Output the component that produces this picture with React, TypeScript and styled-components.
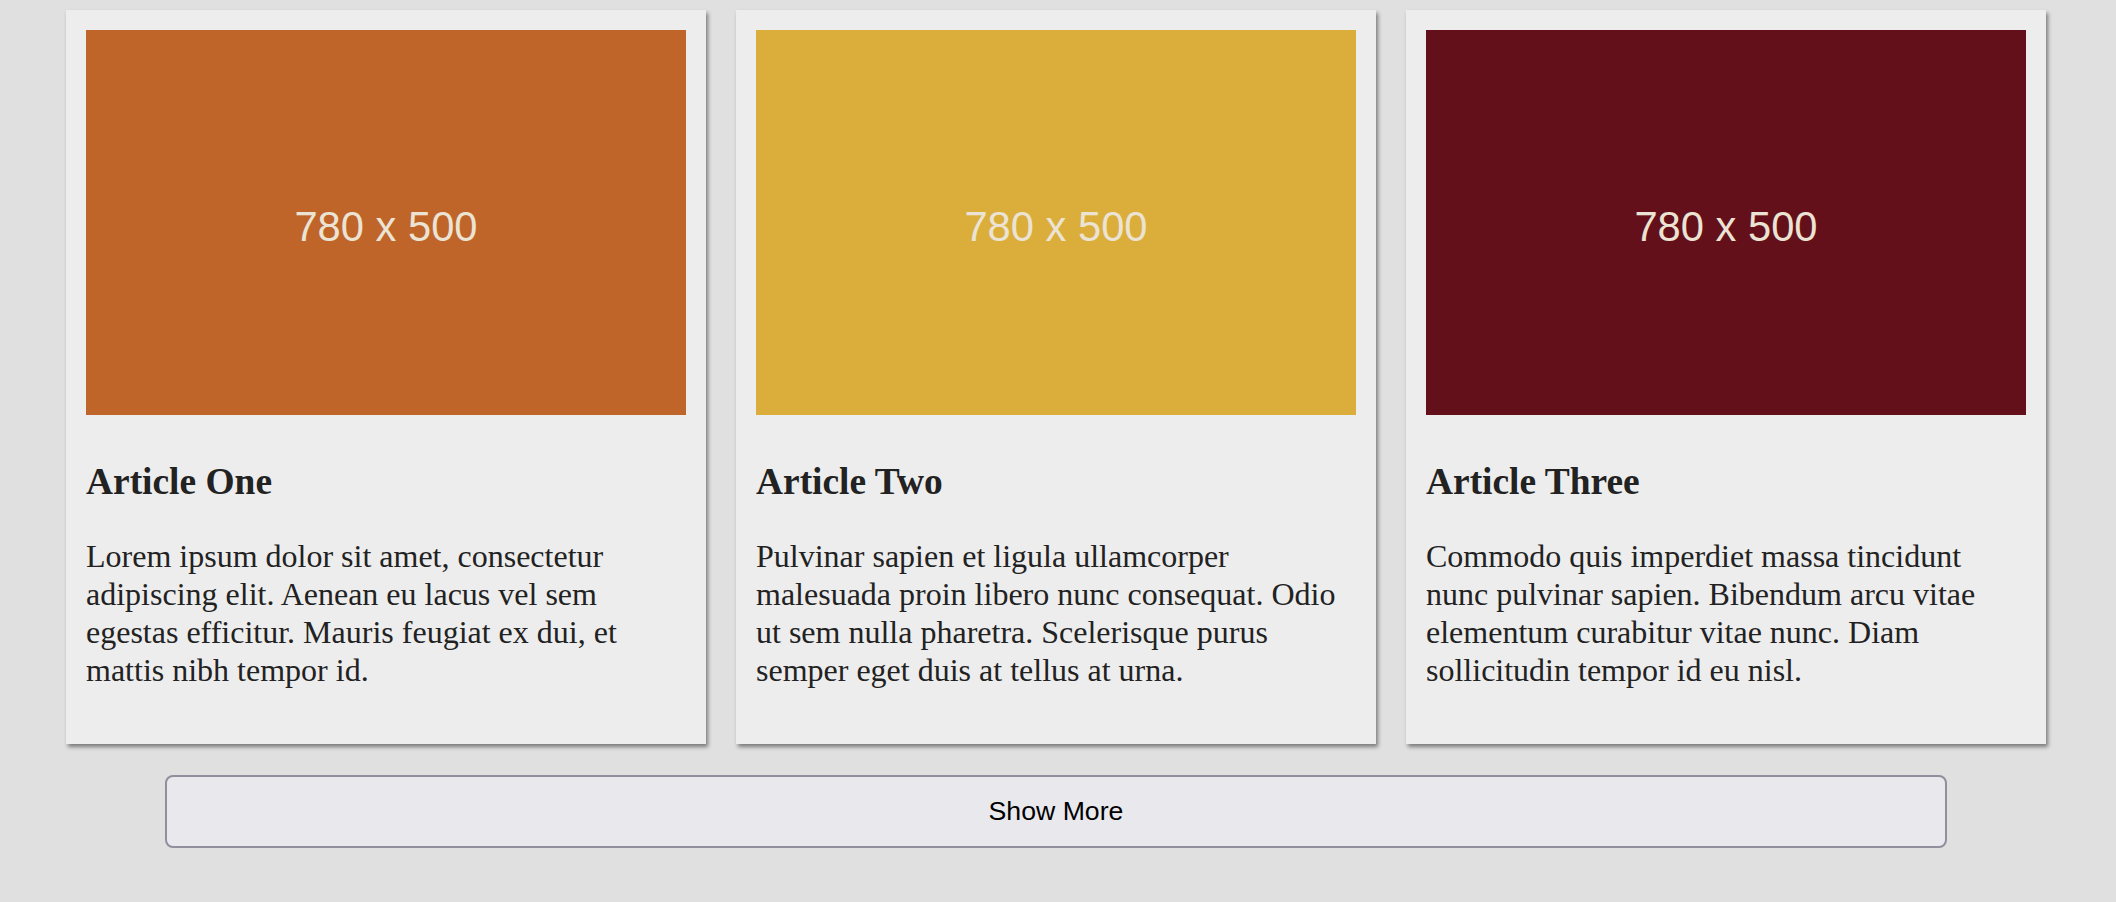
import styled, { createGlobalStyle } from 'styled-components';

const GlobalStyle = createGlobalStyle`
  html, body {
    margin: 0;
    padding: 0;
    background: #e0e0e0;
  }
  body {
    font-family: "Liberation Serif", "Times New Roman", serif;
    font-size: 32px;
    color: #222;
  }
`;

const Page = styled.main`
  width: 1980px;
  padding: 10px 0 56px 66px;
`;

const CardGrid = styled.section`
  display: grid;
  grid-template-columns: repeat(3, 640px);
  gap: 30px;
`;

const Card = styled.article`
  background: #ededed;
  padding: 20px 20px 23px;
  box-shadow: 2px 3px 4px rgba(0, 0, 0, 0.45);
`;

const Thumb = styled.div<{ $bg: string }>`
  box-sizing: border-box;
  width: 600px;
  height: 385px;
  padding-top: 8px;
  background: ${(p) => p.$bg};
  display: flex;
  align-items: center;
  justify-content: center;
  font-family: "Liberation Sans", Arial, sans-serif;
  font-size: 41.7px;
  color: #ebe3d3;
`;

const Title = styled.h3`
  font-size: 37.44px;
  font-weight: 700;
  margin: 44.5px 0 34px;
  line-height: 1.15;
`;

const Body = styled.p`
  margin: 0 0 32px;
  line-height: 38.2px;
`;

const MoreButton = styled.button`
  display: block;
  width: 90%;
  margin: 31px auto 0;
  padding: 19px 8px;
  background: #e9e9ed;
  border: 2px solid #8f8f9d;
  border-radius: 8px;
  font-family: "Liberation Sans", Arial, sans-serif;
  font-size: 26.67px;
  color: #000;
  cursor: pointer;
`;

const articles = [
  {
    title: 'Article One',
    color: '#c0652a',
    text: 'Lorem ipsum dolor sit amet, consectetur adipiscing elit. Aenean eu lacus vel sem egestas efficitur. Mauris feugiat ex dui, et mattis nibh tempor id.',
  },
  {
    title: 'Article Two',
    color: '#dbae3c',
    text: 'Pulvinar sapien et ligula ullamcorper malesuada proin libero nunc consequat. Odio ut sem nulla pharetra. Scelerisque purus semper eget duis at tellus at urna.',
  },
  {
    title: 'Article Three',
    color: '#64101a',
    text: 'Commodo quis imperdiet massa tincidunt nunc pulvinar sapien. Bibendum arcu vitae elementum curabitur vitae nunc. Diam sollicitudin tempor id eu nisl.',
  },
];

const App = () => {
  return (
    <>
      <GlobalStyle />
      <Page>
        <CardGrid>
          {articles.map((a) => (
            <Card key={a.title}>
              <Thumb $bg={a.color}>780 x 500</Thumb>
              <Title>{a.title}</Title>
              <Body>{a.text}</Body>
            </Card>
          ))}
        </CardGrid>
        <MoreButton>Show More</MoreButton>
      </Page>
    </>
  );
};

export default App;
